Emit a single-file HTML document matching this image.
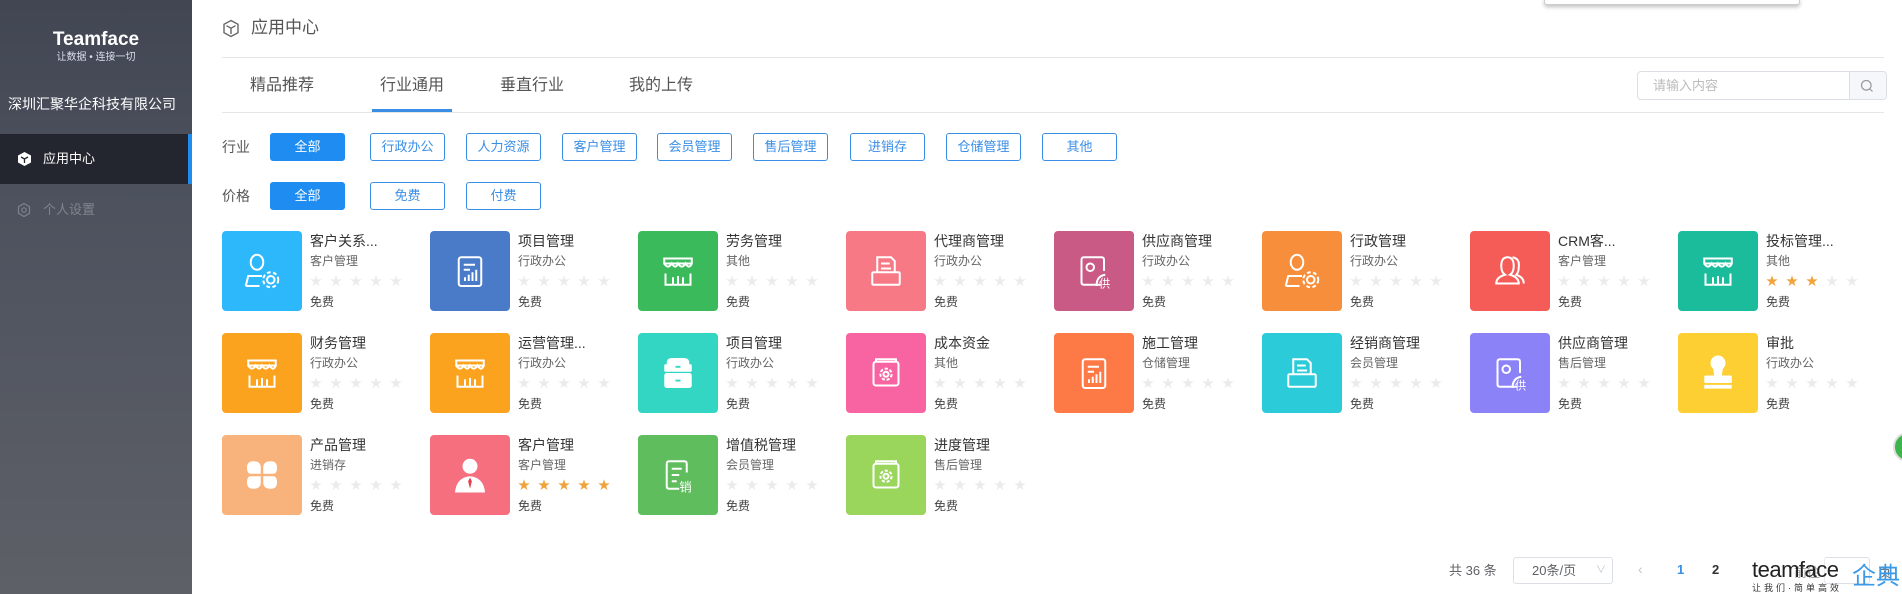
<!DOCTYPE html>
<html><head><meta charset="utf-8"><style>
*{margin:0;padding:0;box-sizing:border-box}
body{width:1902px;height:594px;overflow:hidden;background:#fff;font-family:"Liberation Sans","Noto Sans CJK SC",sans-serif;position:relative;color:#333}
.abs{position:absolute}
#side{left:0;top:0;width:192px;height:594px;background:linear-gradient(180deg,#414652 0%,#4d525e 35%,#5e6067 100%)}
.btn{position:absolute;height:28px;width:75px;border:1px solid #3a8ee6;border-radius:3px;color:#3a8ee6;font-size:13px;line-height:26px;text-align:center}
.btn.on{background:#1e8cf0;color:#fff;border-color:#1e8cf0}
.card{position:absolute;width:200px;height:80px}
.ic{position:absolute;left:0;top:0;width:80px;height:80px;border-radius:4px;display:flex;align-items:center;justify-content:center}
.ic svg{width:50px;height:50px}
.t{position:absolute;left:88px;top:0;font-size:14px;color:#333;white-space:nowrap;line-height:20px}
.s{position:absolute;left:88px;top:22px;font-size:12px;color:#666;line-height:16px}
.st{position:absolute;left:88px;top:43px;font-size:12px;color:#ebebeb;letter-spacing:8px;line-height:14px}
.st b{color:#f0a33a;font-weight:normal}
.f{position:absolute;left:88px;top:63px;font-size:12px;color:#444;line-height:16px}
</style></head><body>
<div id="side" class="abs">
 <div class="abs" style="left:0;width:192px;top:30px;text-align:center;color:#fff;font-weight:bold;font-size:19px;line-height:20px">Teamface</div>
 <div class="abs" style="left:0;width:192px;top:52px;text-align:center;color:#dde;font-size:10px;line-height:12px">让数据 • 连接一切</div>
 <div class="abs" style="left:8px;top:94px;color:#fff;font-size:14px;line-height:20px">深圳汇聚华企科技有限公司</div>
 <div class="abs" style="left:0;top:134px;width:192px;height:50px;background:#23262e;border-right:4px solid #1e8cf0"></div>
 <svg class="abs" style="left:17px;top:151px" width="15" height="16" viewBox="0 0 15 16"><path d="M7.5 1L14 4.5V11.5L7.5 15L1 11.5V4.5Z" fill="#fff"/><path d="M4 6L7.5 8L11 6M7.5 8V12" stroke="#23262e" stroke-width="1.3" fill="none"/></svg>
 <div class="abs" style="left:43px;top:150px;color:#fff;font-size:13px;line-height:18px">应用中心</div>
 <svg class="abs" style="left:16px;top:202px" width="16" height="16" viewBox="0 0 16 16"><path d="M8 1.5L13.5 4.7V11.3L8 14.5L2.5 11.3V4.7Z" stroke="#7d818a" stroke-width="1.2" fill="none"/><circle cx="8" cy="8" r="2.2" stroke="#7d818a" stroke-width="1.2" fill="none"/></svg>
 <div class="abs" style="left:43px;top:201px;color:#80848c;font-size:13px;line-height:18px">个人设置</div>
</div>

<svg class="abs" style="left:222px;top:19px" width="18" height="19" viewBox="0 0 18 19"><path d="M9 1.5L16 5.3V13.7L9 17.5L2 13.7V5.3Z" stroke="#666" stroke-width="1.4" fill="none"/><path d="M4.5 6.7L9 9.2L13.5 6.7M9 9.2V15" stroke="#666" stroke-width="1.4" fill="none"/></svg>
<div class="abs" style="left:251px;top:17px;font-size:17px;color:#555;line-height:22px">应用中心</div>
<div class="abs" style="left:222px;top:57px;width:1662px;height:1px;background:#e6e6e6"></div>

<div class="abs" style="left:250px;top:76px;font-size:16px;color:#555;line-height:20px">精品推荐</div>
<div class="abs" style="left:380px;top:76px;font-size:16px;color:#555;line-height:20px">行业通用</div>
<div class="abs" style="left:500px;top:76px;font-size:16px;color:#555;line-height:20px">垂直行业</div>
<div class="abs" style="left:629px;top:76px;font-size:16px;color:#555;line-height:20px">我的上传</div>
<div class="abs" style="left:372px;top:109px;width:80px;height:3px;background:#3a8ee6"></div>
<div class="abs" style="left:222px;top:112px;width:1662px;height:1px;background:#e6e6e6"></div>

<div class="abs" style="left:1637px;top:71px;width:250px;height:29px;border:1px solid #dcdfe6;border-radius:4px;background:#fff"></div>
<div class="abs" style="left:1849px;top:72px;width:37px;height:27px;background:#f5f7fa;border-left:1px solid #dcdfe6;border-radius:0 4px 4px 0"></div>
<div class="abs" style="left:1653px;top:77px;font-size:13px;color:#bbb;line-height:17px">请输入内容</div>
<svg class="abs" style="left:1860px;top:79px" width="14" height="14" viewBox="0 0 14 14"><circle cx="6.3" cy="6.3" r="4.8" stroke="#999" stroke-width="1.2" fill="none"/><path d="M10 10L12.5 12.5" stroke="#999" stroke-width="1.2"/></svg>

<div class="abs" style="left:1544px;top:-2px;width:256px;height:7px;border:1px solid #ccc;border-radius:3px;background:#fff;box-shadow:0 2px 4px rgba(0,0,0,.25)"></div>

<div class="abs" style="left:222px;top:138px;font-size:14px;color:#555;line-height:18px">行业</div>
<div class="btn on" style="left:270px;top:133px">全部</div>
<div class="btn" style="left:370px;top:133px">行政办公</div>
<div class="btn" style="left:466px;top:133px">人力资源</div>
<div class="btn" style="left:562px;top:133px">客户管理</div>
<div class="btn" style="left:657px;top:133px">会员管理</div>
<div class="btn" style="left:753px;top:133px">售后管理</div>
<div class="btn" style="left:850px;top:133px">进销存</div>
<div class="btn" style="left:946px;top:133px">仓储管理</div>
<div class="btn" style="left:1042px;top:133px">其他</div>
<div class="abs" style="left:222px;top:187px;font-size:14px;color:#555;line-height:18px">价格</div>
<div class="btn on" style="left:270px;top:182px">全部</div>
<div class="btn" style="left:370px;top:182px">免费</div>
<div class="btn" style="left:466px;top:182px">付费</div>

<!-- row 1 -->
<div class="card" style="left:222px;top:231px"><div class="ic" style="background:#2db8fb"><svg viewBox="0 0 40 40" fill="none" stroke="#fff" stroke-width="1.6"><ellipse cx="16" cy="13" rx="5" ry="6"/><path d="M7 32L9 24H20"/><path d="M7 32H18"/><circle cx="27" cy="27" r="3"/><circle cx="27" cy="27" r="6" stroke-dasharray="3 2"/></svg></div><div class="t">客户关系...</div><div class="s">客户管理</div><div class="st">★★★★★</div><div class="f">免费</div></div>
<div class="card" style="left:430px;top:231px"><div class="ic" style="background:#4a7bc9"><svg viewBox="0 0 40 40" fill="none" stroke="#fff" stroke-width="1.6"><rect x="11" y="9" width="18" height="23" rx="2"/><path d="M15 15H24M15 19H20M16 28V25M19 28V23M22 28V21M25 28V19"/></svg></div><div class="t">项目管理</div><div class="s">行政办公</div><div class="st">★★★★★</div><div class="f">免费</div></div>
<div class="card" style="left:638px;top:231px"><div class="ic" style="background:#3bba5b"><svg viewBox="0 0 40 40" fill="none" stroke="#fff" stroke-width="1.6"><path d="M9 10H31V14H9Z"/><path d="M9 14Q12 19 15 14Q18 19 20 14Q23 19 26 14Q29 19 31 14"/><path d="M10 22V31H30V22M16 31V25M20 31V24M24 31V25"/></svg></div><div class="t">劳务管理</div><div class="s">其他</div><div class="st">★★★★★</div><div class="f">免费</div></div>
<div class="card" style="left:846px;top:231px"><div class="ic" style="background:#f87986"><svg viewBox="0 0 40 40" fill="none" stroke="#fff" stroke-width="1.6"><path d="M13 21V9H24L27 12V21"/><path d="M16 14H23M16 18H24"/><rect x="9" y="21" width="22" height="10" rx="1"/></svg></div><div class="t">代理商管理</div><div class="s">行政办公</div><div class="st">★★★★★</div><div class="f">免费</div></div>
<div class="card" style="left:1054px;top:231px"><div class="ic" style="background:#c95a86"><svg viewBox="0 0 40 40" fill="none" stroke="#fff" stroke-width="1.6"><path d="M26 31H12Q10 31 10 29V11Q10 9 12 9H26Q28 9 28 11V20"/><circle cx="17" cy="17" r="3"/><path d="M22 32Q22 24 29 23" /><text x="24" y="33" font-size="9" fill="#fff" stroke="none" font-family="Noto Sans CJK SC">供</text></svg></div><div class="t">供应商管理</div><div class="s">行政办公</div><div class="st">★★★★★</div><div class="f">免费</div></div>
<div class="card" style="left:1262px;top:231px"><div class="ic" style="background:#f78e3c"><svg viewBox="0 0 40 40" fill="none" stroke="#fff" stroke-width="1.6"><ellipse cx="16" cy="13" rx="5" ry="6"/><path d="M7 32L9 24H20"/><path d="M7 32H18"/><circle cx="27" cy="27" r="3"/><circle cx="27" cy="27" r="6" stroke-dasharray="3 2"/></svg></div><div class="t">行政管理</div><div class="s">行政办公</div><div class="st">★★★★★</div><div class="f">免费</div></div>
<div class="card" style="left:1470px;top:231px"><div class="ic" style="background:#f55c58"><svg viewBox="0 0 40 40" fill="none" stroke="#fff" stroke-width="1.6"><path d="M18 9Q13 9 13 16Q13 21 16 23Q9 25 9 30H27Q27 25 20 23Q23 21 23 16Q23 9 18 9Z"/><path d="M22 9Q28 10 27 17Q27 21 25 23Q31 25 31 30"/></svg></div><div class="t">CRM客...</div><div class="s">客户管理</div><div class="st">★★★★★</div><div class="f">免费</div></div>
<div class="card" style="left:1678px;top:231px"><div class="ic" style="background:#1bbc9c"><svg viewBox="0 0 40 40" fill="none" stroke="#fff" stroke-width="1.6"><path d="M9 10H31V14H9Z"/><path d="M9 14Q12 19 15 14Q18 19 20 14Q23 19 26 14Q29 19 31 14"/><path d="M10 22V31H30V22M16 31V25M20 31V24M24 31V25"/></svg></div><div class="t">投标管理...</div><div class="s">其他</div><div class="st"><b>★★★</b>★★</div><div class="f">免费</div></div>
<!-- row 2 -->
<div class="card" style="left:222px;top:333px"><div class="ic" style="background:#fba31e"><svg viewBox="0 0 40 40" fill="none" stroke="#fff" stroke-width="1.6"><path d="M9 10H31V14H9Z"/><path d="M9 14Q12 19 15 14Q18 19 20 14Q23 19 26 14Q29 19 31 14"/><path d="M10 22V31H30V22M16 31V25M20 31V24M24 31V25"/></svg></div><div class="t">财务管理</div><div class="s">行政办公</div><div class="st">★★★★★</div><div class="f">免费</div></div>
<div class="card" style="left:430px;top:333px"><div class="ic" style="background:#fba31e"><svg viewBox="0 0 40 40" fill="none" stroke="#fff" stroke-width="1.6"><path d="M9 10H31V14H9Z"/><path d="M9 14Q12 19 15 14Q18 19 20 14Q23 19 26 14Q29 19 31 14"/><path d="M10 22V31H30V22M16 31V25M20 31V24M24 31V25"/></svg></div><div class="t">运营管理...</div><div class="s">行政办公</div><div class="st">★★★★★</div><div class="f">免费</div></div>
<div class="card" style="left:638px;top:333px"><div class="ic" style="background:#33d6c2"><svg viewBox="0 0 40 40"><path d="M11 12Q11 8 15 8H25Q29 8 29 12V18H11Z" fill="#fff"/><rect x="9" y="20" width="22" height="12" rx="2" fill="#fff"/><rect x="9" y="13" width="22" height="6" rx="1" fill="#fff"/><path d="M18 15H22M18 26H22" stroke="#33d6c2" stroke-width="1.5"/></svg></div><div class="t">项目管理</div><div class="s">行政办公</div><div class="st">★★★★★</div><div class="f">免费</div></div>
<div class="card" style="left:846px;top:333px"><div class="ic" style="background:#f864a2"><svg viewBox="0 0 40 40" fill="none" stroke="#fff" stroke-width="1.6"><rect x="10" y="11" width="20" height="19" rx="2"/><path d="M12 11V9H28V11"/><circle cx="20" cy="21" r="2"/><circle cx="20" cy="21" r="4.5" stroke-dasharray="2.5 1.5"/></svg></div><div class="t">成本资金</div><div class="s">其他</div><div class="st">★★★★★</div><div class="f">免费</div></div>
<div class="card" style="left:1054px;top:333px"><div class="ic" style="background:#fd7946"><svg viewBox="0 0 40 40" fill="none" stroke="#fff" stroke-width="1.6"><rect x="11" y="9" width="18" height="23" rx="2"/><path d="M15 15H24M15 19H20M16 28V25M19 28V23M22 28V21M25 28V19"/></svg></div><div class="t">施工管理</div><div class="s">仓储管理</div><div class="st">★★★★★</div><div class="f">免费</div></div>
<div class="card" style="left:1262px;top:333px"><div class="ic" style="background:#2ccbd9"><svg viewBox="0 0 40 40" fill="none" stroke="#fff" stroke-width="1.6"><path d="M13 21V9H24L27 12V21"/><path d="M16 14H23M16 18H24"/><rect x="9" y="21" width="22" height="10" rx="1"/></svg></div><div class="t">经销商管理</div><div class="s">会员管理</div><div class="st">★★★★★</div><div class="f">免费</div></div>
<div class="card" style="left:1470px;top:333px"><div class="ic" style="background:#8b82f8"><svg viewBox="0 0 40 40" fill="none" stroke="#fff" stroke-width="1.6"><path d="M26 31H12Q10 31 10 29V11Q10 9 12 9H26Q28 9 28 11V20"/><circle cx="17" cy="17" r="3"/><path d="M22 32Q22 24 29 23"/><text x="24" y="33" font-size="9" fill="#fff" stroke="none" font-family="Noto Sans CJK SC">供</text></svg></div><div class="t">供应商管理</div><div class="s">售后管理</div><div class="st">★★★★★</div><div class="f">免费</div></div>
<div class="card" style="left:1678px;top:333px"><div class="ic" style="background:#fdcf32"><svg viewBox="0 0 40 40" fill="#fff"><circle cx="20" cy="12" r="6"/><path d="M16 16H24L23 22H17Z"/><rect x="9" y="22" width="22" height="6" rx="1"/><rect x="9" y="29.5" width="22" height="3"/></svg></div><div class="t">审批</div><div class="s">行政办公</div><div class="st">★★★★★</div><div class="f">免费</div></div>
<!-- row 3 -->
<div class="card" style="left:222px;top:435px"><div class="ic" style="background:#f8b27b"><svg viewBox="0 0 40 40" fill="#fff"><path d="M19 19H11Q8 19 8 14Q8 9 13 9Q19 9 19 14Z"/><path d="M21 19H29Q32 19 32 14Q32 9 27 9Q21 9 21 14Z"/><path d="M19 21H11Q8 21 8 26Q8 31 13 31Q19 31 19 26Z"/><path d="M21 21H29Q32 21 32 26Q32 31 27 31Q21 31 21 26Z"/></svg></div><div class="t">产品管理</div><div class="s">进销存</div><div class="st">★★★★★</div><div class="f">免费</div></div>
<div class="card" style="left:430px;top:435px"><div class="ic" style="background:#f56f7f"><svg viewBox="0 0 40 40"><circle cx="20" cy="13" r="6" fill="#fff"/><path d="M8 34Q9 22 20 21Q31 22 32 34Z" fill="#fff"/><path d="M20 22L18.5 25L20 31L21.5 25Z" fill="#e5404e"/></svg></div><div class="t">客户管理</div><div class="s">客户管理</div><div class="st"><b>★★★★★</b></div><div class="f">免费</div></div>
<div class="card" style="left:638px;top:435px"><div class="ic" style="background:#5fbd5e"><svg viewBox="0 0 40 40" fill="none" stroke="#fff" stroke-width="1.6"><path d="M27 18V11Q27 9 25 9H13Q11 9 11 11V29Q11 31 13 31H21"/><path d="M15 15H23M15 20H21M15 25H19"/><text x="21" y="33" font-size="10" fill="#fff" stroke="none" font-family="Noto Sans CJK SC">销</text></svg></div><div class="t">增值税管理</div><div class="s">会员管理</div><div class="st">★★★★★</div><div class="f">免费</div></div>
<div class="card" style="left:846px;top:435px"><div class="ic" style="background:#9ad65b"><svg viewBox="0 0 40 40" fill="none" stroke="#fff" stroke-width="1.6"><rect x="10" y="11" width="20" height="19" rx="2"/><path d="M12 11V9H28V11"/><circle cx="20" cy="21" r="2"/><circle cx="20" cy="21" r="4.5" stroke-dasharray="2.5 1.5"/></svg></div><div class="t">进度管理</div><div class="s">售后管理</div><div class="st">★★★★★</div><div class="f">免费</div></div>

<div class="abs" style="left:1893px;top:432px;width:30px;height:30px;border-radius:50%;background:#3cb54a;border:2px solid #ddd"></div>

<div class="abs" style="left:1449px;top:562px;font-size:13px;color:#606266;line-height:17px">共 36 条</div>
<div class="abs" style="left:1513px;top:557px;width:100px;height:27px;border:1px solid #dcdfe6;border-radius:3px"></div>
<div class="abs" style="left:1532px;top:562px;font-size:13px;color:#606266;line-height:17px">20条/页</div>
<div class="abs" style="left:1596px;top:561px;font-size:10px;color:#c0c4cc">∨</div>
<div class="abs" style="left:1638px;top:561px;font-size:14px;color:#c0c4cc">‹</div>
<div class="abs" style="left:1677px;top:562px;font-size:13px;color:#3a8ee6;font-weight:bold">1</div>
<div class="abs" style="left:1712px;top:562px;font-size:13px;color:#303133;font-weight:bold">2</div>
<div class="abs" style="left:1794px;top:562px;font-size:13px;color:#606266">前往</div>
<div class="abs" style="left:1824px;top:557px;width:46px;height:27px;border:1px solid #dcdfe6;border-radius:3px"></div>
<div class="abs" style="left:1878px;top:562px;font-size:13px;color:#606266">页</div>
<div class="abs" style="left:1752px;top:558px;font-size:22px;color:#222;line-height:24px;letter-spacing:-0.5px;background:rgba(255,255,255,.4)">teamface</div>
<div class="abs" style="left:1752px;top:583px;font-size:9px;color:#333;line-height:10px;letter-spacing:3px">让我们·简单高效</div>
<div class="abs" style="left:1852px;top:562px;font-size:24px;color:#3a9ae8;line-height:30px">企典</div>
</body></html>
